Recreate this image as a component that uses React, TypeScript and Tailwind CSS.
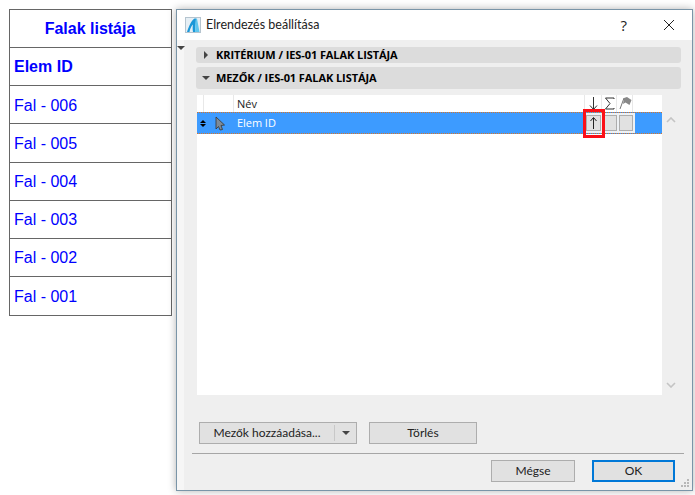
const rows = ['Fal - 006', 'Fal - 005', 'Fal - 004', 'Fal - 003', 'Fal - 002', 'Fal - 001']

function ListTable() {
  return (
    <div className="w-[163px] h-[307px] shrink-0 border border-[#666] grid grid-rows-8 divide-y divide-[#666] font-['Liberation_Sans',sans-serif] text-[16px] text-[#0000ff]">
      <div className="flex items-center justify-center font-bold pr-[1px]">Falak listája</div>
      <div className="flex items-center pl-[4px] font-bold">Elem ID</div>
      {rows.map((row) => (
        <div key={row} className="flex items-center pl-[4px] pt-[2px]">
          {row}
        </div>
      ))}
    </div>
  )
}

function AppLogo() {
  return (
    <svg width="16" height="16" viewBox="0 0 16 16" className="shrink-0">
      <rect x="0.5" y="0.5" width="15" height="15" fill="#e6eff5" stroke="#b5c4cf" />
      <path d="M2 15 C4 9 6 4 9.5 1.5 L11 1.5 L10 15 L8 15 C7.5 12 7.5 10 8 7.5 C6 9.5 5 12 4.5 15 Z" fill="#1a97d8" />
      <path d="M11 1.5 L12 1.5 L14.5 15 L10 15 Z" fill="#5fc6ee" />
    </svg>
  )
}

function SectionHeader({ title, open }: { title: string; open?: boolean }) {
  return (
    <div className={`flex items-center bg-[#dcdcdc] rounded-[3px] ${open ? 'h-[22px] mt-[4px]' : 'h-[16px]'}`}>
      <span className="w-[20px] flex justify-center">
        {open ? (
          <span className="w-0 h-0 border-x-[4px] border-x-transparent border-t-[4px] border-t-[#444]" />
        ) : (
          <span className="w-0 h-0 border-y-[4px] border-y-transparent border-l-[4px] border-l-[#444]" />
        )}
      </span>
      <span className="text-[11px] font-bold text-black tracking-[-0.08px]">{title}</span>
    </div>
  )
}

function FieldList() {
  return (
    <div className="relative flex mt-[6px] h-[300px]">
      <div className="w-[465px] ml-[1px] bg-white flex flex-col">
        <div className="h-[17px] flex text-[11px] text-[#222]">
          <div className="w-[7px] border-r border-[#e8e8e8]" />
          <div className="w-[30px] border-r border-[#e8e8e8]" />
          <div className="w-[351px] pl-[3px] border-r border-[#e8e8e8] leading-[17px]">Név</div>
          <div className="w-[17px] border-r border-[#e8e8e8] flex justify-center">
            <svg width="9" height="16" viewBox="0 0 9 16">
              <path d="M4.5 2 V14 M1 10.5 L4.5 14.5 L8 10.5" fill="none" stroke="#333" strokeWidth="1" />
            </svg>
          </div>
          <div className="w-[15px] border-r border-[#e8e8e8] flex justify-center pl-[1px]">
            <svg width="11" height="16" viewBox="0 0 11 16">
              <path d="M10 4 V3 H1.5 L6 8.5 L1.5 14 H10 V13" fill="none" stroke="#333" strokeWidth="1" />
            </svg>
          </div>
          <div className="w-[16px] border-r border-[#e8e8e8] flex justify-center pl-[1px]">
            <svg width="13" height="16" viewBox="0 0 13 16">
              <path d="M1 14 L5 3" fill="none" stroke="#777" strokeWidth="1" />
              <path d="M5 3 L8 2 L12.5 5 L10.5 10 L6.5 7.5 L4 9 Z" fill="#888" />
            </svg>
          </div>
        </div>
        <div className="h-[22px] flex items-center bg-[#3d9bff] border-y border-dotted border-[#d8762a] text-[11px] text-white">
          <div className="w-[7px] ml-[2px] flex flex-col items-center gap-[1px]">
            <span className="w-0 h-0 border-x-[3px] border-x-transparent border-b-[3px] border-b-black" />
            <span className="w-0 h-0 border-x-[3px] border-x-transparent border-t-[3px] border-t-black" />
          </div>
          <div className="w-[28px] flex justify-center">
            <svg width="12" height="15" viewBox="0 0 12 15">
              <path d="M2 1 L10.5 9 L7 9.5 L8.5 13.5 L6 14 L4.5 10.5 L2 13 Z" fill="#7d8b99" stroke="#333" strokeWidth="0.8" />
            </svg>
          </div>
          <div className="w-[351px] pl-[3px] tracking-[-0.05px]">Elem ID</div>
          <div className="flex h-full items-center gap-[2px] bg-[#eef1f4] px-[2px] py-[2px] -ml-[1px]">
            <div className="w-[15px] h-[16px] bg-[#e1e1e1] border border-[#adadad] flex justify-center">
              <svg width="9" height="14" viewBox="0 0 9 14">
                <path d="M4.5 13 V2 M1.5 5 L4.5 1.5 L7.5 5" fill="none" stroke="#222" strokeWidth="1" />
              </svg>
            </div>
            <div className="w-[14px] h-[16px] bg-[#e1e1e1] border border-[#adadad]" />
            <div className="w-[14px] h-[16px] bg-[#e1e1e1] border border-[#adadad]" />
          </div>
        </div>
      </div>
      <div className="w-[18px] flex flex-col items-center justify-between py-[22px]">
        <svg width="10" height="6" viewBox="0 0 10 6">
          <path d="M1 5 L5 1 L9 5" fill="none" stroke="#c4c4c4" strokeWidth="1.6" />
        </svg>
        <svg width="10" height="6" viewBox="0 0 10 6" className="mb-[-15px]">
          <path d="M1 1 L5 5 L9 1" fill="none" stroke="#c4c4c4" strokeWidth="1.6" />
        </svg>
      </div>
      {/* red highlight drawn on top of the screenshot */}
      <div className="absolute left-[387px] top-[14px] w-[22px] h-[29px] border-[3px] border-[#fb1018]" />
    </div>
  )
}

function Dialog() {
  return (
    <div className="relative w-[517px] h-[482px] ml-[4px] shrink-0 border border-[#7a95a8] bg-[#efefef] shadow-[0_0_8px_rgba(0,0,0,0.3)] flex flex-col font-['Open_Sans',sans-serif]">
      <div className="h-[30px] bg-white flex items-center pl-[8px]">
        <AppLogo />
        <span className="ml-[5px] text-[12.5px] font-['Lato',sans-serif] text-[#222]">Elrendezés beállítása</span>
        <span className="ml-auto text-[15px] text-[#222] mr-[36px]">?</span>
        <svg width="12" height="12" viewBox="0 0 12 12" className="mr-[17px]">
          <path d="M1 1 L11 11 M11 1 L1 11" stroke="#222" strokeWidth="1" />
        </svg>
      </div>
      <div className="flex-1 flex">
        <div className="w-[7px] bg-[#f6f6f6] pt-[6px]">
          <span className="block w-0 h-0 border-x-[4px] border-x-transparent border-t-[4px] border-t-[#444]" />
        </div>
        <div className="flex-1 flex flex-col pl-[12px] pr-[11px] pt-[7px]">
          <SectionHeader title="KRITÉRIUM / IES-01 FALAK LISTÁJA" />
          <SectionHeader title="MEZŐK / IES-01 FALAK LISTÁJA" open />
          <FieldList />
          <div className="flex mt-[27px] ml-[3px] gap-[12px] text-[12px] font-['Lato',sans-serif] text-[#222]">
            <div className="w-[158px] h-[22px] bg-[#e1e1e1] border border-[#adadad] flex items-center">
              <span className="w-[134px] text-center">Mezők hozzáadása...</span>
              <span className="w-px h-[16px] bg-white border-l border-[#c8c8c8]" />
              <span className="flex-1 flex justify-center">
                <span className="w-0 h-0 border-x-[4px] border-x-transparent border-t-[4px] border-t-[#444]" />
              </span>
            </div>
            <div className="w-[108px] h-[22px] bg-[#e1e1e1] border border-[#adadad] flex items-center justify-center">Törlés</div>
          </div>
          <div className="mt-[9px] -ml-[4px] -mr-[3px] border-t border-[#a6a6a6]" />
          <div className="flex justify-end gap-[17px] mt-[6px] mr-[6px] text-[12px] font-['Lato',sans-serif] text-[#222]">
            <div className="w-[84px] h-[22px] bg-[#e1e1e1] border border-[#adadad] flex items-center justify-center">Mégse</div>
            <div className="w-[83px] h-[22px] bg-[#e1e1e1] border-2 border-[#0078d7] flex items-center justify-center">OK</div>
          </div>
        </div>
      </div>
      <svg width="9" height="9" viewBox="0 0 9 9" className="absolute right-[2px] bottom-[2px]">
        <path d="M6 0 h2 v2 h-2 Z M3 3 h2 v2 h-2 Z M6 3 h2 v2 h-2 Z M0 6 h2 v2 h-2 Z M3 6 h2 v2 h-2 Z M6 6 h2 v2 h-2 Z" fill="#b8b8b8" />
      </svg>
    </div>
  )
}

export default function App() {
  return (
    <div className="w-[695px] h-[495px] overflow-hidden bg-white flex items-start pl-[9px] pt-[9px]">
      <ListTable />
      <Dialog />
    </div>
  )
}
